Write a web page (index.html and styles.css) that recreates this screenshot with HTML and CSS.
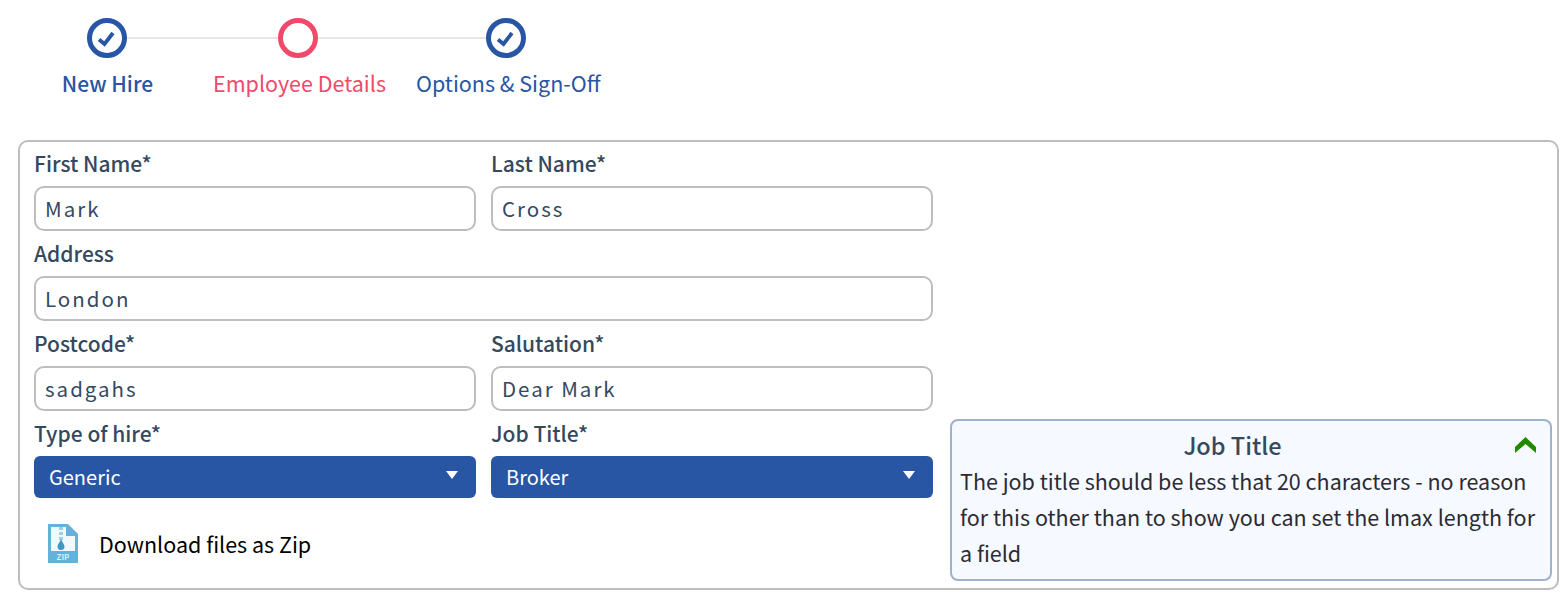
FILE: index.html
```html
<!DOCTYPE html>
<html lang="en">
<head>
    <meta charset="UTF-8">
    <title>New Hire</title>
    <link rel="stylesheet" href="styles.css">
</head>
<body>
    <div class="stepper">
        <div class="step-track">
            <svg class="step-dot" viewBox="0 0 40 40"><circle cx="20" cy="20" r="17.5" fill="none" stroke="#2855a4" stroke-width="5"/><path d="M12 21.500l5.500 4.500L26 15" fill="none" stroke="#2855a4" stroke-width="3.800"/></svg>
            <div class="step-line line-a"></div>
            <svg class="step-dot" viewBox="0 0 40 40"><circle cx="20" cy="20" r="17.5" fill="none" stroke="#f0496a" stroke-width="5"/></svg>
            <div class="step-line line-b"></div>
            <svg class="step-dot" viewBox="0 0 40 40"><circle cx="20" cy="20" r="17.5" fill="none" stroke="#2855a4" stroke-width="5"/><path d="M12 21.500l5.500 4.500L26 15" fill="none" stroke="#2855a4" stroke-width="3.800"/></svg>
        </div>
        <div class="step-labels">
            <span class="step-label first">New Hire</span>
            <span class="step-label current">Employee Details</span>
            <span class="step-label">Options &amp; Sign-Off</span>
        </div>
    </div>

    <div class="frame">
        <div class="form">
            <div class="field">
                <label>First Name*</label>
                <input class="text-input" type="text" value="Mark">
            </div>
            <div class="field">
                <label>Last Name*</label>
                <input class="text-input" type="text" value="Cross">
            </div>
            <div class="field wide">
                <label>Address</label>
                <input class="text-input" type="text" value="London">
            </div>
            <div class="field">
                <label>Postcode*</label>
                <input class="text-input" type="text" value="sadgahs">
            </div>
            <div class="field">
                <label>Salutation*</label>
                <input class="text-input" type="text" value="Dear Mark">
            </div>
            <div class="field">
                <label>Type of hire*</label>
                <div class="select-box">Generic<span class="caret"></span></div>
            </div>
            <div class="field">
                <label>Job Title*</label>
                <div class="select-box">Broker<span class="caret"></span></div>
            </div>
            <div class="download wide">
                <svg class="zip-icon" viewBox="0 0 30 39">
                    <path d="M0 0H20L30 10V39H0Z" fill="#62b2da"/>
                    <path d="M3 3H18V12H27V27H3Z" fill="#f2f9fc"/>
                    <path d="M11 3h4v3h-4zM11 8h4v3h-4zM11 13h4v3h-4z" fill="#9ccfe8"/>
                    <path d="M13 15c.8 3 3.500 5 3.500 7.500a3.500 3.500 0 0 1-7 0C9.500 20 12.200 18 13 15z" fill="#3f97c6"/>
                    <text class="zip-text" x="15" y="36" text-anchor="middle">ZIP</text>
                </svg>
                <span>Download files as Zip</span>
            </div>
        </div>

        <div class="help-box">
            <div class="help-head">
                <h3>Job Title</h3>
                <svg class="chevron" viewBox="0 0 21 16"><path d="M0 16V10L10.500 0 21 10V16L10.500 7Z" fill="#218a00"/></svg>
            </div>
            <p>The job title should be less that 20 characters - no reason for this other than to show you can set the lmax length for a field</p>
        </div>
    </div>
</body>
</html>
```

FILE: styles.css
```css
body {
    margin: 0;
    background: #fff;
    font-family: "Noto Sans CJK JP", "Noto Sans", sans-serif;
    font-size: 21.5px;
    color: #34495e;
    overflow: hidden;
}
.stepper {
    height: 140px;
    padding-top: 18px;
    box-sizing: border-box;
}
.step-track {
    display: flex;
    align-items: center;
    padding-left: 87px;
}
.step-dot {
    width: 40px;
    height: 40px;
    flex: none;
}
.step-line {
    height: 2px;
    background: #e6e6e6;
}
.line-a {
    width: 151px;
}
.line-b {
    width: 168px;
}
.step-labels {
    display: flex;
    padding-left: 32px;
    margin-top: 7px;
}
.step-label {
    padding: 0 15px;
    line-height: 36px;
    color: #2855a4;
    white-space: nowrap;
}
.step-label.first {
    min-width: 121px;
    margin-right: 15px;
    text-align: center;
    font-weight: 500;
    font-size: 21px;
}
.step-label.current {
    color: #f0496a;
}
.frame {
    display: flex;
    justify-content: space-between;
    align-items: flex-end;
    width: 1541px;
    height: 450px;
    margin-left: 18px;
    padding: 6px 5px 7px 14px;
    box-sizing: border-box;
    border: 2px solid #bdbdbd;
    border-radius: 10px;
}
.form {
    display: grid;
    grid-template-columns: 442px 442px;
    column-gap: 15px;
    align-self: flex-start;
}
.field {
    display: flex;
    flex-direction: column;
    height: 90px;
}
.wide {
    grid-column: 1 / 3;
}
.field label {
    line-height: 30px;
    height: 38px;
    font-weight: 500;
    font-size: 21px;
}
.text-input {
    width: 100%;
    height: 45px;
    padding: 0 9px 2px 9px;
    box-sizing: border-box;
    border: 2px solid #bdbdbd;
    border-radius: 10px;
    background: #fff;
    font: inherit;
    font-size: 20.5px;
    letter-spacing: 2px;
    color: #34495e;
}
.select-box {
    display: flex;
    justify-content: space-between;
    align-items: center;
    height: 42px;
    padding: 0 18px 2px 15px;
    box-sizing: border-box;
    border-radius: 6px;
    background: #2855a4;
    color: #fff;
    font-size: 20px;
}
.caret {
    width: 0;
    height: 0;
    margin-top: -2px;
    border-left: 6.500px solid transparent;
    border-right: 6.500px solid transparent;
    border-top: 8px solid #fff;
}
.download {
    display: flex;
    align-items: center;
    gap: 21px;
    padding-left: 14px;
    margin-top: 15px;
    height: 40px;
    color: #000;
}
.zip-icon {
    width: 30px;
    height: 39px;
}
.zip-text {
    font-size: 8px;
    font-weight: 700;
    fill: #d7edf7;
}
.help-box {
    width: 602px;
    height: 162px;
    padding: 7px 8px 0 8px;
    box-sizing: border-box;
    border: 2px solid #9fb1cb;
    border-radius: 8px;
    background: #f6f9ff;
    color: #2b2b33;
}
.help-head {
    display: flex;
    justify-content: center;
    align-items: center;
    position: relative;
    height: 35px;
    padding: 0 37px 2px 0;
    box-sizing: border-box;
}
.help-head h3 {
    margin: 0;
    font-size: 23.5px;
    font-weight: 500;
    color: #34495e;
}
.chevron {
    position: absolute;
    right: 6px;
    top: 9px;
    width: 21px;
    height: 16px;
}
.help-box p {
    margin: 0;
    line-height: 36px;
    font-size: 21.5px;
}
```
